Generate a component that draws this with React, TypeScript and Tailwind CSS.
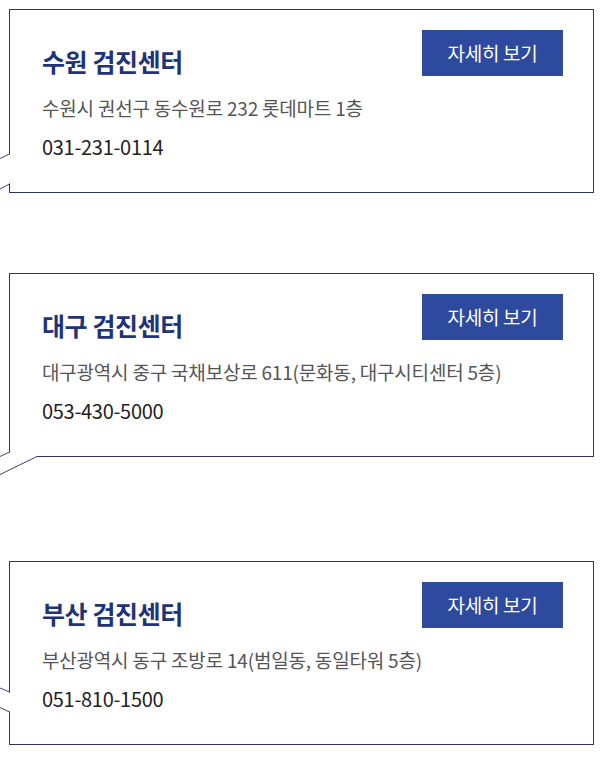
import { FC } from 'react';

type Tail = 'down' | 'corner' | 'up';

type Center = {
  name: string;
  address: string;
  phone: string;
  tail: Tail;
};

const centers: Center[] = [
  {
    name: '수원 검진센터',
    address: '수원시 권선구 동수원로 232 롯데마트 1층',
    phone: '031-231-0114',
    tail: 'down',
  },
  {
    name: '대구 검진센터',
    address: '대구광역시 중구 국채보상로 611(문화동, 대구시티센터 5층)',
    phone: '053-430-5000',
    tail: 'corner',
  },
  {
    name: '부산 검진센터',
    address: '부산광역시 동구 조방로 14(범일동, 동일타워 5층)',
    phone: '051-810-1500',
    tail: 'up',
  },
];

// speech-bubble tail on the left edge, pointing at the map off-screen
const BubbleTail: FC<{ tail: Tail }> = ({ tail }) => {
  const stroke = '#3a4478';
  return (
    <svg
      className="absolute left-[-10px] top-[-1px] overflow-visible pointer-events-none"
      width="50"
      height="210"
      viewBox="0 0 50 210"
    >
      {tail === 'down' && (
        <>
          <rect x="8" y="145.5" width="4" height="29" fill="#fff" />
          <line x1="9.5" y1="145" x2="0" y2="149.5" stroke={stroke} strokeWidth="1" />
          <line x1="9.5" y1="175" x2="0" y2="180" stroke={stroke} strokeWidth="1" />
        </>
      )}
      {tail === 'corner' && (
        <>
          <rect x="8" y="179.5" width="4" height="6" fill="#fff" />
          <rect x="8" y="181" width="29" height="4" fill="#fff" />
          <line x1="9.5" y1="179" x2="0" y2="183.5" stroke={stroke} strokeWidth="1" />
          <line x1="37" y1="183.5" x2="0" y2="201.5" stroke={stroke} strokeWidth="1" />
        </>
      )}
      {tail === 'up' && (
        <>
          <rect x="8" y="131.5" width="4" height="19" fill="#fff" />
          <line x1="9.5" y1="131" x2="0" y2="127" stroke={stroke} strokeWidth="1" />
          <line x1="9.5" y1="151" x2="0" y2="146.5" stroke={stroke} strokeWidth="1" />
        </>
      )}
    </svg>
  );
};

const CenterCard: FC<{ center: Center }> = ({ center }) => {
  return (
    <div className="relative h-[184px] border border-[#2b3566] bg-white pt-[20px] pl-8 pr-[30px]">
      <BubbleTail tail={center.tail} />
      <div className="flex items-start justify-between">
        <h3 className="mt-[15px] text-[25px] leading-[32px] font-bold tracking-[-0.4px] text-[#1f3377]">
          {center.name}
        </h3>
        <button className="flex h-[46px] w-[141px] items-center justify-center bg-[#2d4a9e] text-[19px] tracking-[-0.3px] text-white">
          자세히 보기
        </button>
      </div>
      <p className="mt-[18px] text-[19px] leading-[26px] tracking-[-0.2px] text-[#555]">
        {center.address}
      </p>
      <p className="mt-[12px] text-[20px] leading-[28px] tracking-[-0.3px] text-[#222]">
        {center.phone}
      </p>
    </div>
  );
};

const App: FC = () => {
  return (
    <div
      className="min-h-[757px] w-[602px] bg-white pt-[9px] pl-[9px] pr-[8px]"
      style={{ fontFamily: '"Noto Sans CJK KR", "Noto Sans", sans-serif' }}
    >
      <div className="flex flex-col">
        <CenterCard center={centers[0]} />
        <div className="h-[80px]" />
        <CenterCard center={centers[1]} />
        <div className="h-[104px]" />
        <CenterCard center={centers[2]} />
      </div>
    </div>
  );
};

export default App;
